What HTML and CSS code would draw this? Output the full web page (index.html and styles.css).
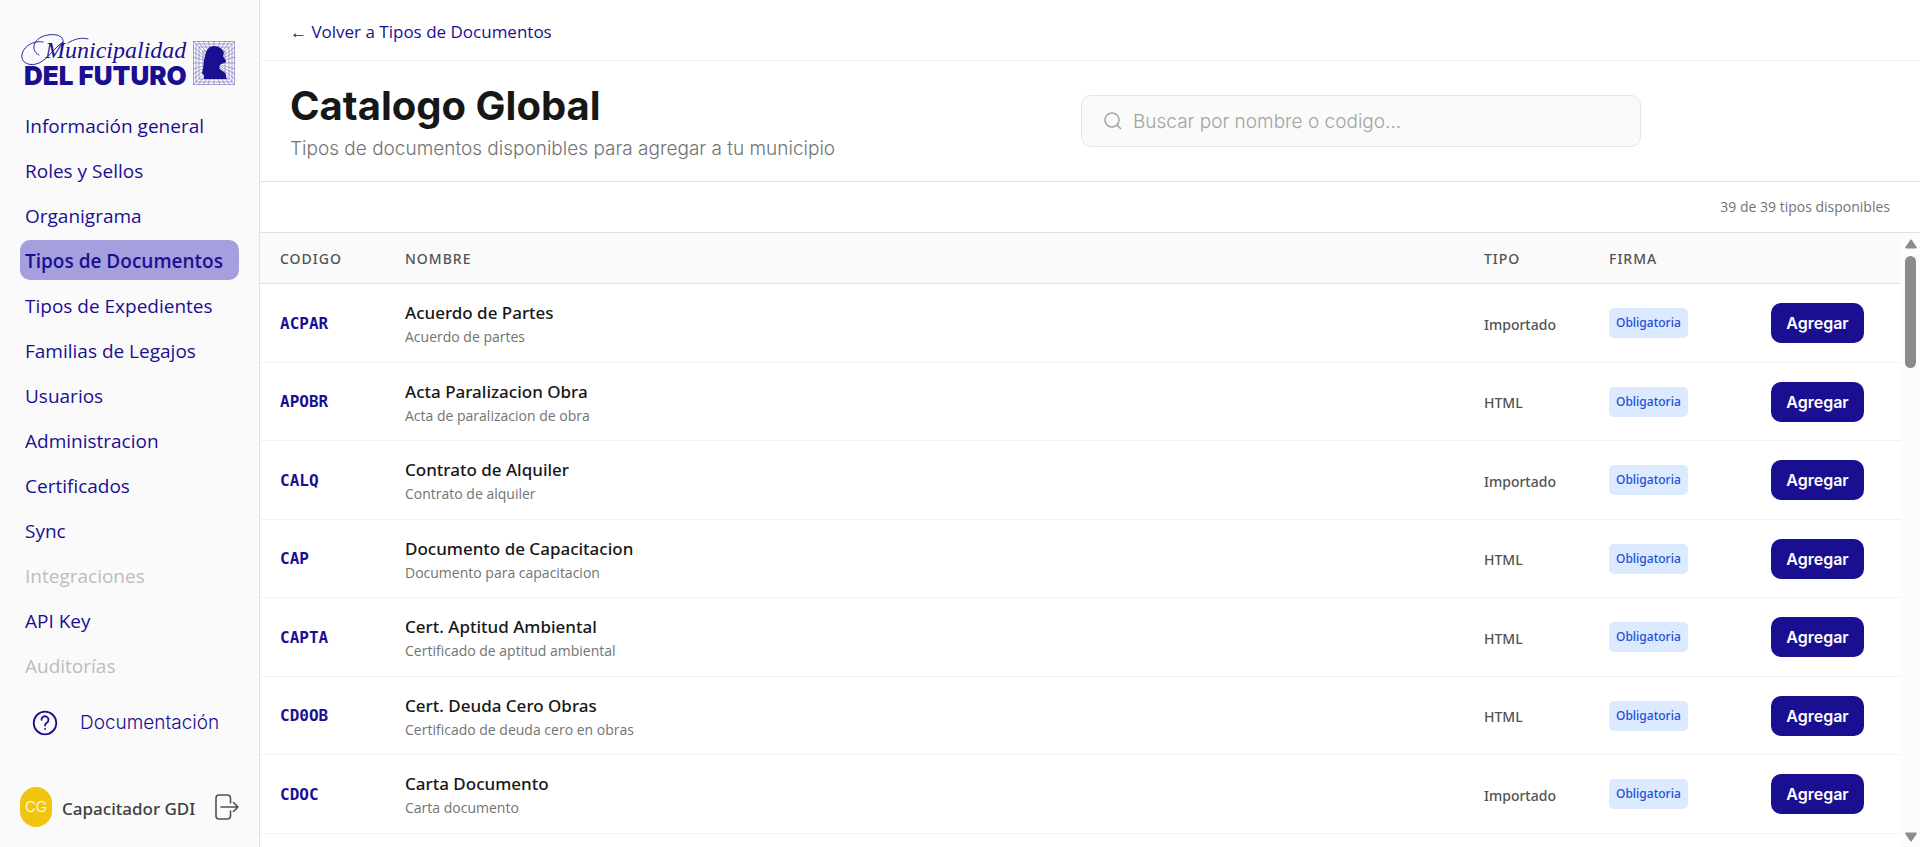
FILE: index.html
```html
<!DOCTYPE html>
<html lang="es">

<head>
    <meta charset="UTF-8">
    <meta name="viewport" content="width=device-width, initial-scale=1.0">
    <title>Catalogo Global</title>
    <link rel="stylesheet" href="styles.css">
</head>

<body>
    <div class="app">
        <aside class="sidebar">
            <a class="logo" href="#" aria-label="Municipalidad del Futuro">
                <svg width="216" height="56" viewBox="0 0 216 56">
                    <!-- flourishes around the M -->
                    <g fill="none" stroke="#1b0f91" stroke-width="0.9" stroke-linecap="round">
                        <path d="M23 8C16 6 4 11 2 20c-2 9 8 13 17 9C28 25 34 14 43 8" />
                        <path d="M19 21C9 16 14 3 28 1c12-2 18 4 14 10" />
                        <path d="M48 9C54 5 62 3 68 5" />
                    </g>
                    <text class="logo-script" x="25" y="24">Municipalidad</text>
                    <text class="logo-block" x="4" y="51">DEL FUTURO</text>
                    <!-- emblem -->
                    <g fill="none" stroke="#1b0f91" stroke-width="0.5" opacity="0.7">
                        <path d="M173.500 7.500h41v43h-41zM176 10h36v38h-36zM179 13h30v32h-30zM183 17h22v24h-22z" />
                        <path d="M173 7l42 44M215 7l-42 44M194 7v44M173 29h42M183 7l22 44M205 7l-22 44M173 18l42 22M173 40l42-22" />
                        <path d="M178 7l32 44M210 7l-32 44M188 7l12 44M200 7l-12 44M173 13l42 32M173 45l42-32M173 23l42 12M173 35l42-12" />
                    </g>
                    <path fill="#1b0f91" d="M194 12c5 0 9 3 10 7l-1 3 3 5c1 2-4 2-6 4-1 2-1 4 1 5 2 1 5 3 5 5v2l1 2h-23v-4l-2-2c2-6 1-11 3-17 1-6 4-10 9-10z" />
                </svg>
            </a>

            <nav class="menu">
                <a class="menu-item" href="#">Información general</a>
                <a class="menu-item" href="#">Roles y Sellos</a>
                <a class="menu-item" href="#">Organigrama</a>
                <a class="menu-item active" href="#" aria-current="page">Tipos de Documentos</a>
                <a class="menu-item" href="#">Tipos de Expedientes</a>
                <a class="menu-item" href="#">Familias de Legajos</a>
                <a class="menu-item" href="#">Usuarios</a>
                <a class="menu-item" href="#">Administracion</a>
                <a class="menu-item" href="#">Certificados</a>
                <a class="menu-item" href="#">Sync</a>
                <a class="menu-item disabled" href="#" aria-disabled="true">Integraciones</a>
                <a class="menu-item" href="#">API Key</a>
                <a class="menu-item disabled" href="#" aria-disabled="true">Auditorías</a>
            </nav>

            <a class="docs-link" href="#">
                <svg width="26" height="26" viewBox="0 0 26 26" fill="none" stroke="currentColor" stroke-width="1.8" stroke-linecap="round" stroke-linejoin="round">
                    <circle cx="13" cy="13" r="11.300" />
                    <path d="M9.500 9.800a3.500 3.500 0 1 1 5.400 2.900c-1.300.8-1.900 1.400-1.900 2.800" />
                    <path d="M13 19v.1" />
                </svg>
                Documentación
            </a>

            <div class="user">
                <span class="avatar">CG</span>
                <span class="user-name">Capacitador GDI</span>
                <button class="logout" type="button" aria-label="Cerrar sesión">
                    <svg width="24" height="26" viewBox="0 0 24 26" fill="none" stroke="currentColor" stroke-width="1.600" stroke-linecap="round" stroke-linejoin="round">
                        <path d="M15.500 9V4a3 3 0 0 0-3-3H4a3 3 0 0 0-3 3v18a3 3 0 0 0 3 3h8.500a3 3 0 0 0 3-3v-5" />
                        <path d="M6 13h17M18.500 8.500L23 13l-4.500 4.500" />
                    </svg>
                </button>
            </div>
        </aside>

        <main class="content">
            <div class="topbar">
                <a class="back-link" href="#">← Volver a Tipos de Documentos</a>
            </div>

            <header class="page-header">
                <div class="page-title">
                    <h1>Catalogo Global</h1>
                    <p>Tipos de documentos disponibles para agregar a tu municipio</p>
                </div>
                <label class="search">
                    <svg width="18" height="18" viewBox="0 0 18 18" fill="none" stroke="currentColor" stroke-width="1.500" stroke-linecap="round">
                        <circle cx="8" cy="8" r="7" />
                        <path d="M13.200 13.200L16.500 16.500" />
                    </svg>
                    <input type="search" placeholder="Buscar por nombre o codigo..." aria-label="Buscar por nombre o codigo">
                </label>
            </header>

            <p class="count">39 de 39 tipos disponibles</p>

            <div class="catalog">
                <div class="table-wrap">
                    <table>
                        <thead>
                            <tr>
                                <th class="col-code">Codigo</th>
                                <th>Nombre</th>
                                <th class="col-type">Tipo</th>
                                <th class="col-sign">Firma</th>
                                <th class="col-action"></th>
                            </tr>
                        </thead>
                        <tbody>
                            <tr>
                                <td class="code">ACPAR</td>
                                <td class="name"><strong>Acuerdo de Partes</strong><small>Acuerdo de partes</small></td>
                                <td class="type">Importado</td>
                                <td><span class="badge">Obligatoria</span></td>
                                <td><button class="btn-add" type="button">Agregar</button></td>
                            </tr>
                            <tr>
                                <td class="code">APOBR</td>
                                <td class="name"><strong>Acta Paralizacion Obra</strong><small>Acta de paralizacion de obra</small></td>
                                <td class="type">HTML</td>
                                <td><span class="badge">Obligatoria</span></td>
                                <td><button class="btn-add" type="button">Agregar</button></td>
                            </tr>
                            <tr>
                                <td class="code">CALQ</td>
                                <td class="name"><strong>Contrato de Alquiler</strong><small>Contrato de alquiler</small></td>
                                <td class="type">Importado</td>
                                <td><span class="badge">Obligatoria</span></td>
                                <td><button class="btn-add" type="button">Agregar</button></td>
                            </tr>
                            <tr>
                                <td class="code">CAP</td>
                                <td class="name"><strong>Documento de Capacitacion</strong><small>Documento para capacitacion</small></td>
                                <td class="type">HTML</td>
                                <td><span class="badge">Obligatoria</span></td>
                                <td><button class="btn-add" type="button">Agregar</button></td>
                            </tr>
                            <tr>
                                <td class="code">CAPTA</td>
                                <td class="name"><strong>Cert. Aptitud Ambiental</strong><small>Certificado de aptitud ambiental</small></td>
                                <td class="type">HTML</td>
                                <td><span class="badge">Obligatoria</span></td>
                                <td><button class="btn-add" type="button">Agregar</button></td>
                            </tr>
                            <tr>
                                <td class="code">CD0OB</td>
                                <td class="name"><strong>Cert. Deuda Cero Obras</strong><small>Certificado de deuda cero en obras</small></td>
                                <td class="type">HTML</td>
                                <td><span class="badge">Obligatoria</span></td>
                                <td><button class="btn-add" type="button">Agregar</button></td>
                            </tr>
                            <tr>
                                <td class="code">CDOC</td>
                                <td class="name"><strong>Carta Documento</strong><small>Carta documento</small></td>
                                <td class="type">Importado</td>
                                <td><span class="badge">Obligatoria</span></td>
                                <td><button class="btn-add" type="button">Agregar</button></td>
                            </tr>
                        </tbody>
                    </table>
                </div>
                <div class="scrollbar" aria-hidden="true">
                    <svg width="12" height="10" viewBox="0 0 12 10">
                        <path d="M6 1.500L10.800 8.500H1.200z" fill="#8b8b8b" stroke="#8b8b8b" stroke-width="2" stroke-linejoin="round" />
                    </svg>
                    <div class="thumb"></div>
                    <svg width="12" height="10" viewBox="0 0 12 10">
                        <path d="M6 8.500L10.800 1.500H1.200z" fill="#8b8b8b" stroke="#8b8b8b" stroke-width="2" stroke-linejoin="round" />
                    </svg>
                </div>
            </div>
        </main>
    </div>
</body>

</html>
```
FILE: styles.css
```css
* {
    box-sizing: border-box;
}

body {
    margin: 0;
    font-family: "Open Sans", "Noto Sans", sans-serif;
    color: #171717;
    background-color: #fff;
}

a {
    color: #1b0f91;
    text-decoration: none;
}

button {
    font-family: inherit;
    cursor: pointer;
}

.app {
    display: flex;
    height: 100vh;
    overflow: hidden;
}

/* Sidebar */
.sidebar {
    display: flex;
    flex-direction: column;
    flex: none;
    width: 260px;
    padding: 34px 20px 20px;
    background-color: #fafafa;
    border-right: 1px solid #e2e2e2;
}

.logo {
    display: block;
    height: 71px;
}

.logo-script {
    font: italic 24px "Liberation Serif", serif;
    fill: #1b0f91;
}

.logo-block {
    font: 900 26px Inter, sans-serif;
    fill: #1b0f91;
}

.menu {
    display: flex;
    flex-direction: column;
    gap: 5px;
}

.menu-item {
    padding: 2px 5px 0;
    border-radius: 10px;
    font-size: 19px;
    line-height: 38px;
    white-space: nowrap;
}

.menu-item.active {
    background-color: #a69fde;
    font-weight: 600;
}

.menu-item.disabled {
    color: #bdbdbd;
}

.docs-link {
    display: flex;
    align-items: center;
    gap: 22px;
    margin-top: 22px;
    padding: 0 12px;
    font-family: Inter, sans-serif;
    font-size: 19px;
    font-weight: 300;
    line-height: 32px;
}

.user {
    display: flex;
    align-items: center;
    gap: 10px;
    margin-top: auto;
}

.avatar {
    width: 32px;
    border-radius: 16px;
    background-color: #f1c40f;
    color: #fff;
    font-family: Inter, sans-serif;
    font-size: 15px;
    font-weight: 300;
    line-height: 40px;
    text-align: center;
}

.user-name {
    padding-top: 2px;
    color: #404040;
    font-family: "Noto Sans", sans-serif;
    font-size: 17px;
    font-weight: 500;
    white-space: nowrap;
}

.logout {
    margin-left: auto;
    padding: 0;
    border: none;
    background: none;
    color: #525252;
    line-height: 0;
}

/* Main column */
.content {
    display: flex;
    flex-direction: column;
    flex: 1;
    min-width: 0;
}

.topbar {
    padding: 20px 30px 16px;
    border-bottom: 1px solid #f3f3f3;
    font-size: 17px;
    line-height: 24px;
}

.page-header {
    display: flex;
    align-items: center;
    height: 121px;
    padding: 0 30px;
    border-bottom: 1px solid #e2e2e2;
    font-family: Inter, sans-serif;
}

.page-title {
    flex: 1;
}

.page-title h1 {
    margin: 0;
    font-size: 40px;
    font-weight: 700;
    line-height: 48px;
}

.page-title p {
    margin: 7px 0 0;
    color: #737373;
    font-size: 19px;
    font-weight: 300;
    line-height: 24px;
}

.search {
    display: flex;
    align-items: center;
    gap: 11px;
    width: 560px;
    height: 52px;
    margin-right: 249px;
    padding: 0 22px;
    border: 1px solid #e5e5e5;
    border-radius: 10px;
    background-color: #fafafa;
    color: #a3a3a3;
}

.search input {
    flex: 1;
    padding: 0;
    border: none;
    outline: none;
    background: none;
    font-family: inherit;
    font-size: 19px;
    font-weight: 300;
}

.search input::placeholder {
    color: #a3a3a3;
}

.count {
    margin: 0;
    padding: 13px 30px;
    border-bottom: 1px solid #e2e2e2;
    color: #737373;
    font-size: 14px;
    line-height: 24px;
    text-align: right;
}

/* Table */
.catalog {
    display: flex;
    flex: 1;
    min-height: 0;
}

.table-wrap {
    flex: 1;
    overflow: hidden;
}

table {
    width: 100%;
    border-collapse: separate;
    border-spacing: 0;
    table-layout: fixed;
    font-family: "Noto Sans", sans-serif;
}

th {
    height: 51px;
    padding: 0 20px;
    border-bottom: 1px solid #e2e2e2;
    background-color: #fafafa;
    color: #525252;
    font-size: 14px;
    font-weight: 500;
    letter-spacing: 1px;
    text-align: left;
    text-transform: uppercase;
}

td {
    height: 79px;
    padding: 0 20px;
    border-bottom: 1px solid #f3f3f3;
}

tr:nth-child(even) td {
    height: 78px;
}

.col-code,
.col-type {
    width: 125px;
}

.col-sign {
    width: 162px;
}

.col-action {
    width: 150px;
}

.name {
    padding-top: 4px;
}

.name strong,
.name small {
    display: block;
    line-height: 24px;
}

.name strong {
    font-size: 17px;
    font-weight: 500;
}

.name small {
    color: #737373;
    font-family: "Open Sans", sans-serif;
    font-size: 14px;
}

.code {
    color: #1b0f91;
    font-family: "DejaVu Sans Mono", monospace;
    font-size: 16px;
    font-weight: 700;
}

.type {
    padding-top: 2px;
    color: #525252;
    font-size: 14px;
    font-weight: 500;
}

.badge {
    display: inline-block;
    padding: 0 7px;
    border-radius: 5px;
    background-color: #dbeafe;
    color: #1d4ed8;
    font-size: 12px;
    font-weight: 500;
    line-height: 30px;
}

.btn-add {
    display: block;
    width: 93px;
    height: 40px;
    padding: 0;
    border: none;
    border-radius: 10px;
    background-color: #1b0f91;
    color: #fff;
    font-family: Inter, sans-serif;
    font-size: 16px;
    font-weight: 600;
}

.scrollbar {
    display: flex;
    flex-direction: column;
    align-items: center;
    width: 19px;
    padding: 6px 0 5px;
    background-color: #fcfcfc;
}

.scrollbar .thumb {
    width: 11px;
    height: 112px;
    margin: 7px 0 auto;
    border-radius: 6px;
    background-color: #8b8b8b;
}
```
